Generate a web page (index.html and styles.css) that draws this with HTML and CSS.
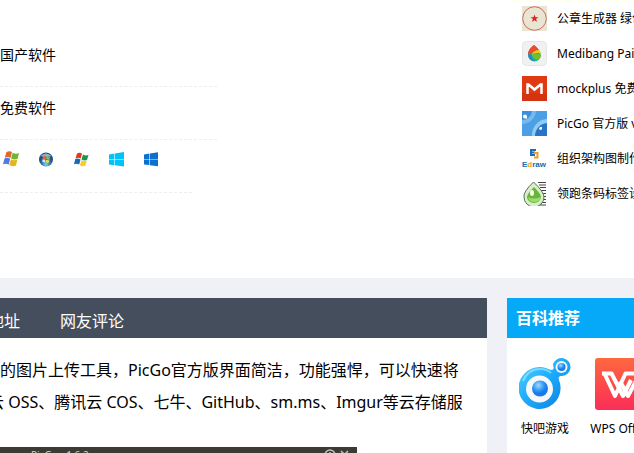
FILE: index.html
```html
<!DOCTYPE html>
<html lang="zh-CN">
<head>
<meta charset="utf-8">
<title>PicGo 官方版</title>
<link rel="stylesheet" href="styles.css">
</head>
<body>
<section class="top">
  <ul class="facts">
    <li>国产软件</li>
    <li>免费软件</li>
    <li class="systems">
      <svg viewBox="0 0 16 16" role="img" aria-label="Windows XP"><path fill="#e2672b" d="M3.500 1q3-1.500 5.500 0L7.500 7Q4.500 5.300 1.700 6.800z"/><path fill="#70b52c" d="M9.600 1.700q3 1.700 6.400.3L14.500 8q-3.500 1.200-6.400-.5z"/><path fill="#5279e2" d="M1.500 7.500Q4.300 6 7.200 7.700l-1.500 5.800Q3 12 0 13.300z"/><path fill="#e5b51c" d="M7.900 8.200q3 1.700 6.400.5L13 14.500q-3.500 1.500-6.700-.5z"/></svg>
      <svg viewBox="0 0 16 16" role="img" aria-label="Windows Vista"><defs><radialGradient id="orb" cy=".85"><stop stop-color="#7ad8f5"/><stop offset=".5" stop-color="#3688bd"/><stop offset="1" stop-color="#234f83"/></radialGradient></defs><circle cx="8" cy="8.500" r="7" fill="url(#orb)"/><path d="M2.500 5q5.500-5 11 0-5 2-11 0" fill="#8db2d2"/><path fill="#e76838" d="M5 5.500q2-1.500 3 0L7.500 8 4.500 8z"/><path fill="#83bd55" d="M8.500 5.500q2 1 3.500.5L11.500 9 8 8z"/><path fill="#c9ebff" d="M4.300 8.500 7.300 8.500 7 11.500 4.500 11z"/><path fill="#f2d457" d="M8 8.800 11.500 9.500 10.500 12 7.500 11.500z"/></svg>
      <svg viewBox="0 0 16 16" role="img" aria-label="Windows 7"><path fill="#e33a15" d="M4 2.500q2.500-1.500 5 0L7.700 7.500Q5.500 6 2.600 7.200z"/><path fill="#16984a" d="M10 3.500q2.500 1.500 5.500.5L14 9q-3 1-5.500-.5z"/><path fill="#1769b6" d="M2.300 8Q5 7 7.500 8.500L6.200 13.500Q3.700 12 1 13.300z"/><path fill="#ffc91f" d="M8.300 9.300q2.500 1.500 5.500.5l-1.500 5q-2.800 1.200-5.300-.5z"/></svg>
      <svg viewBox="0 0 16 16" role="img" aria-label="Windows 8"><path fill="#00c3f9" d="M1 3.400 6.400 2.500V8H1zM7 2.400 16 1v7H7zM1 8.600h5.400v5.600L1 13.400zM7 8.600h9V15.500L7 14.300z"/></svg>
      <svg viewBox="0 0 16 16" role="img" aria-label="Windows 10"><path fill="#0b70d0" d="M1 3.400 6.400 2.600V8H1zM7 2.500 15 1.300V8H7zM1 8.600h5.400v5.500L1 13.400zM7 8.600h8V15.300L7 14.200z"/></svg>
    </li>
  </ul>
  <ul class="ranking">
    <li><svg viewBox="0 0 25 25"><path fill="#e9e5d3" d="M0 0h25v25H0z"/><circle cx="12.500" cy="12.500" r="11.800" fill="none" stroke="#d6675d"/><path fill="#d42720" d="m12.500 8.400 1 2.800h3l-2.400 1.800.9 2.900-2.500-1.700-2.500 1.700.9-2.900-2.400-1.800h3z"/></svg><a href="#">公章生成器 绿色版</a></li>
    <li><svg viewBox="0 0 25 25"><rect x=".5" y=".5" width="24" height="24" rx="4" fill="#f1f1f1" stroke="#e5e5e5"/><path fill="#18b99a" d="M12 4q7 6 7 10a6.500 6.500 0 0 1-13 0Q6 9 12 4"/><path fill="#ef4a2d" d="M12 4q3 2 5 5-4 0-7 3t-4 1q0-5 6-9"/><path fill="#f9c817" d="M17 9q2 3 2 5-2-3-5-2-3 0-5 3 2-6 8-6"/><path fill="#2588ce" d="M6 13q2 2 4 0-1 5 3 7-7 0-7-7"/><path fill="#76bd27" d="M10 14q2-3 9 0 0 3-3 5-5-1-6-5"/></svg><a href="#">Medibang Paint</a></li>
    <li><svg viewBox="0 0 25 25"><path fill="#e03a13" d="M0 0h25v25H0z"/><path fill="#c82b0d" d="M0 17h25v8H0z" opacity=".5"/><path fill="none" stroke="#fff" stroke-width="2.500" d="M5.500 18V8.500h1l6 5 6-5h1V18"/></svg><a href="#">mockplus 免费版</a></li>
    <li><svg viewBox="0 0 25 25"><path fill="#4b9fe5" d="M0 0h25v25H0z"/><path fill="#91cbf2" d="M25 8a16 16 0 0 0-15 17h15z"/><path fill="#2875c6" d="M25 12a13 13 0 0 0-12 13h12z"/><path fill="#77b9ed" d="M0 0h14A14 14 0 0 1 0 13z"/><path fill="#398fdd" d="M0 0h10A10 10 0 0 1 0 9z"/><path fill="#fff" d="M3 3.500a2 2 0 0 1 2 2v2H3a2 2 0 0 1 0-4M17 18a2 2 0 0 1 2-2h1v2a2 2 0 0 1-3 0"/></svg><a href="#">PicGo 官方版 v2.3</a></li>
    <li><svg viewBox="0 0 25 25"><path fill="none" stroke="#1671b8" stroke-width="2" d="M14 4H9v5h4M9 6.500h4"/><path fill="none" stroke="#f09c2e" stroke-width="2" d="M12 7h3.500v4.500H12"/><text class="edraw" x="0" y="21" fill="#126db1">E<tspan fill="#f29b29">d</tspan>raw</text></svg><a href="#">组织架构图制作软件</a></li>
    <li><svg viewBox="0 0 25 25"><path stroke="#444" stroke-width="1" d="M16 1.500h8M17 4h7M18 6.500h6M19 9.500h5M20 12.500h4M20 15.500h4M20 18.500h4M18 21.500h6M15 24h9"/><path fill="#dceccc" stroke="#477d4b" d="M11.500 1Q22 11 22 16a9 9 0 0 1-20 0Q1 11 11.500 1z"/><path fill="#69b43b" d="M12 6q7 7 7 10a7 6 0 0 1-14 0q0-3 7-10"/><path fill="#9edb71" d="M6 16q5 3 13 0-1 5-7 5-5 0-6-5"/><ellipse cx="10" cy="12" rx="2" ry="3" fill="#f1ffe4"/></svg><a href="#">领跑条码标签设计</a></li>
  </ul>
</section>
<div class="columns">
  <main class="panel">
    <nav class="tabs"><a href="#">下载地址</a><a href="#">网友评论</a></nav>
    <article>
      <p>的图片上传工具，PicGo官方版界面简洁，功能强悍，可以快速将<br>云 OSS、腾讯云 COS、七牛、GitHub、sm.ms、Imgur等云存储服</p>
      <figure class="app"><span>PicGo - 1.6.2</span><svg viewBox="0 0 28 12"><g fill="none" stroke="#c5c2be" stroke-width="1.500"><circle cx="6" cy="6" r="5"/><path d="M6 3v4M17 2l7 7M24 2l-7 7"/></g></svg></figure>
    </article>
  </main>
  <aside class="panel">
    <h2>百科推荐</h2>
    <ul class="apps">
      <li><a href="#"><svg viewBox="0 0 52 52"><defs><linearGradient id="blue" x2="1" y2="1"><stop stop-color="#5bd5ff"/><stop offset=".45" stop-color="#20adfc"/><stop offset="1" stop-color="#087bdf"/></linearGradient><radialGradient id="pupil" cx=".4" cy=".3"><stop stop-color="#a4dbff"/><stop offset=".6" stop-color="#3aa1fa"/><stop offset="1" stop-color="#187be8"/></radialGradient></defs><path fill="url(#blue)" d="M21 9c6 0 9 3 12 3 3-1 1-4 1-6a9 9 0 1 1 9 12c-3 0-4 1-3 4a21 21 0 1 1-19-13"/><circle cx="20.500" cy="31" r="13.500" fill="#f5f7f8"/><circle cx="21" cy="30.500" r="8" fill="url(#pupil)"/><circle cx="42.500" cy="9" r="6" fill="#f2f8fd"/><circle cx="42.500" cy="9" r="4" fill="url(#pupil)"/><path d="M4 23q5-12 17-12 7 0 11 4" fill="none" stroke="#a0e9ff" stroke-width="2" opacity=".65"/></svg>快吧游戏</a></li>
      <li><a href="#"><svg viewBox="0 0 52 52"><defs><linearGradient id="wps" x2="0" y2="1"><stop stop-color="#ff683f"/><stop offset="1" stop-color="#fa2e58"/></linearGradient></defs><rect width="52" height="52" rx="3" fill="url(#wps)"/><path d="M7 15.500h9.500L28 38l8-16M9.500 15.500 20 38l10.500-22.500H45L33 38l-8-15" fill="none" stroke="#fff" stroke-width="4" stroke-linejoin="round"/></svg>WPS Office</a></li>
    </ul>
  </aside>
</div>
</body>
</html>
```
FILE: styles.css
```css
* { box-sizing: border-box; }
body {
  margin: 0;
  height: 100vh;
  overflow: hidden;
  background: #eff1f6;
  color: #000;
  font: 12px/20px "Noto Sans", "Noto Sans CJK SC", sans-serif;
}
ul, p, h2, figure { margin: 0; padding: 0; list-style: none; }
a { color: inherit; text-decoration: none; }
svg { display: block; flex: none; }
.top, .columns {
  display: grid;
  grid-template-columns: minmax(0, 1fr) 127px;
  column-gap: 20px;
}
.top { background: #fff; padding-bottom: 67px; margin-bottom: 20px; }
.facts { padding-top: 34px; font-size: 14px; }
.facts li {
  width: 217px;
  height: 53px;
  padding-top: 11px;
  border-bottom: 1px dashed #eee;
}
.facts .systems { display: flex; gap: 19px; width: 192px; padding: 11px 0 0 3px; }
.systems svg { width: 16px; height: 16px; }
.ranking { padding-left: 15px; border-top: 1px solid #fffff0; overflow: hidden; }
.ranking li { display: flex; align-items: center; gap: 10px; height: 35px; white-space: nowrap; }
.ranking svg { width: 25px; height: 25px; }
.edraw { font: bold 8px "Liberation Sans", sans-serif; }
.panel { background: #fff; overflow: hidden; }
.tabs {
  display: flex;
  height: 40px;
  margin-bottom: 16px;
  padding-top: 3px;
  background: #454e5d;
  color: #fff;
  font-size: 16px;
  line-height: 40px;
}
.tabs a { flex: none; padding: 0 20px; }
.tabs a:first-child { margin-left: -64px; }
article { white-space: nowrap; }
article p { margin-left: -12px; text-indent: 12px; font-size: 16px; line-height: 32px; }
.app {
  display: flex;
  align-items: flex-start;
  justify-content: space-between;
  width: 357px;
  height: 160px;
  margin-top: 29px;
  padding: 2px 5px 0 31px;
  background: #3d3935;
  color: #d2d0cd;
  font-size: 10px;
  line-height: 12px;
}
.app svg { width: 28px; height: 12px; }
h2 {
  height: 40px;
  padding-left: 9px;
  background: #05a9f7;
  color: #fff;
  font-size: 16px;
  line-height: 40px;
}
.apps { display: flex; padding-top: 20px; }
.apps li { flex: none; width: 76px; }
.apps a { display: flex; flex-direction: column; align-items: center; gap: 9px; white-space: nowrap; }
.apps svg { width: 52px; height: 52px; }
```
